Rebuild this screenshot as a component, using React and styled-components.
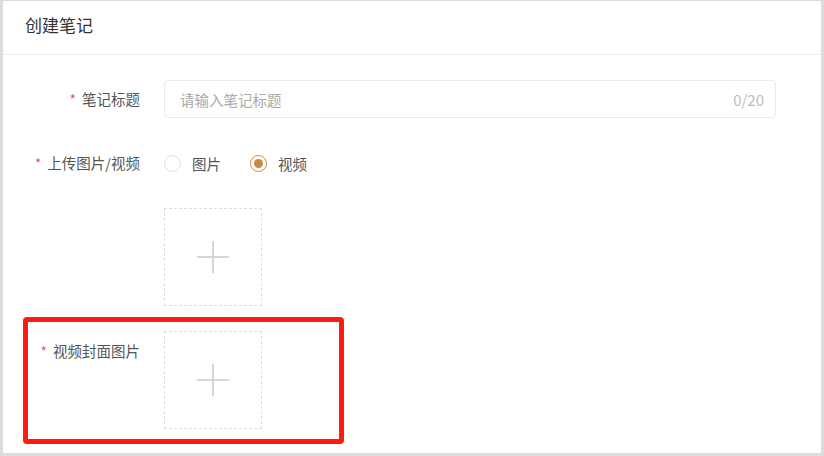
import React from "react";
import styled, { createGlobalStyle } from "styled-components";

const Global = createGlobalStyle`
  html, body { margin: 0; padding: 0; }
  body {
    background: #dcdcdc;
    font-family: "Noto Sans CJK SC", "Noto Sans", "Liberation Sans", sans-serif;
  }
`;

const Frame = styled.div`
  padding: 1px 3px 3px 3px;
  width: 824px;
  box-sizing: border-box;
`;

const Card = styled.div`
  position: relative;
  background: #fff;
  height: 452px;
  box-sizing: border-box;
`;

const Header = styled.div`
  height: 54px;
  box-sizing: border-box;
  border-bottom: 1px solid #efefef;
  display: flex;
  align-items: center;
  padding: 0 0 6px 22px;
  font-size: 17px;
  color: #333;
`;

const Form = styled.div`
  display: flex;
  flex-direction: column;
  gap: 25px;
  padding: 25px 45px 0 0;
`;

const Item = styled.div`
  display: grid;
  grid-template-columns: 137px 1fr;
  column-gap: 24px;
  align-items: start;
`;

const Label = styled.div`
  text-align: right;
  font-size: 14.5px;
  color: #555;
  height: ${(p) => p.$h || 40}px;
  line-height: ${(p) => p.$h || 40}px;
  white-space: nowrap;
  &::before {
    content: ${(p) => (p.$required ? '"*"' : '""')};
    color: #f05a6a;
    margin-right: 6px;
    font-size: 14px;
  }
`;

const InputBox = styled.div`
  height: 38px;
  box-sizing: border-box;
  border: 1px solid #ebebeb;
  border-radius: 4px;
  display: flex;
  align-items: center;
  justify-content: space-between;
  padding: 0 11px 0 15px;
  font-size: 14.5px;
`;

const Placeholder = styled.span`
  color: #a9a9a9;
`;

const Counter = styled.span`
  color: #bdbdbd;
  font-size: 15px;
`;

const RadioGroup = styled.div`
  height: 40px;
  display: flex;
  align-items: center;
  gap: 29px;
`;

const Radio = styled.label`
  display: flex;
  align-items: center;
  gap: 11px;
  font-size: 14.5px;
  color: #555;
`;

const Circle = styled.span`
  width: 17px;
  height: 17px;
  box-sizing: border-box;
  border-radius: 50%;
  border: 1px solid ${(p) => (p.$checked ? "#c98a45" : "#dcdcdc")};
  display: flex;
  align-items: center;
  justify-content: center;
  &::after {
    content: "";
    width: 9px;
    height: 9px;
    border-radius: 50%;
    background: ${(p) => (p.$checked ? "#c98a45" : "transparent")};
  }
`;

const Upload = styled.div`
  width: 98px;
  height: 98px;
  box-sizing: border-box;
  border: 1px dashed #dedede;
  display: flex;
  align-items: center;
  justify-content: center;
`;

const Highlight = styled.div`
  position: absolute;
  left: 20px;
  top: 316px;
  width: 321px;
  height: 127px;
  box-sizing: border-box;
  border: 5px solid #ff1a12;
  border-radius: 4px;
  pointer-events: none;
`;

const Plus = () => (
  <svg width="32" height="32" viewBox="0 0 32 32">
    <path d="M0 16H32M16 0V32" stroke="#d6d6d6" strokeWidth="2" />
  </svg>
);

export default function App() {
  return (
    <Frame>
      <Global />
      <Card>
        <Header>创建笔记</Header>
        <Form>
          <Item>
            <Label $required $h={38}>笔记标题</Label>
            <InputBox>
              <Placeholder>请输入笔记标题</Placeholder>
              <Counter>0/20</Counter>
            </InputBox>
          </Item>
          <Item>
            <Label $required>上传图片/视频</Label>
            <RadioGroup>
              <Radio>
                <Circle />
                图片
              </Radio>
              <Radio>
                <Circle $checked />
                视频
              </Radio>
            </RadioGroup>
          </Item>
          <Item>
            <Label />
            <Upload>
              <Plus />
            </Upload>
          </Item>
          <Item>
            <Label $required>视频封面图片</Label>
            <Upload>
              <Plus />
            </Upload>
          </Item>
        </Form>
        <Highlight />
      </Card>
    </Frame>
  );
}
